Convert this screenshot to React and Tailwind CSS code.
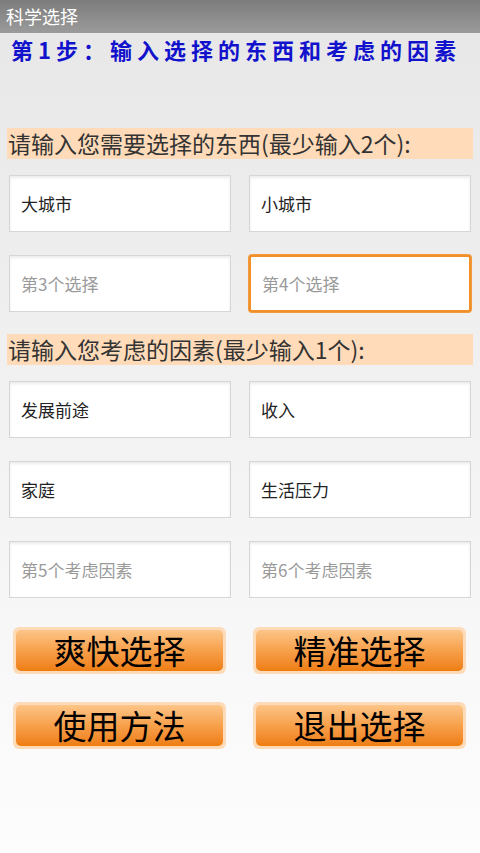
import React from "react";

const font = { fontFamily: '"Noto Sans CJK SC", "Noto Sans", sans-serif' };

function Field({ value, placeholder, focused }) {
  return (
    <input
      readOnly
      defaultValue={value}
      placeholder={placeholder}
      className={
        "h-[57px] w-full bg-white px-[11px] text-[17px] text-[#222] placeholder:text-[#9a9a9a] outline-none " +
        (focused
          ? "border-2 border-[#f1902a] rounded-[3px] shadow-[0_0_0_1px_#f39a3a]"
          : "border border-[#d6d6d6] shadow-[inset_0_2px_3px_rgba(0,0,0,0.08)]")
      }
      style={font}
    />
  );
}

function Btn({ children }) {
  return (
    <div className="h-[47px] rounded-[6px] bg-[#fddbb8] p-[3px] flex">
      <div className="flex-1 rounded-[5px] bg-gradient-to-b from-[#fcc587] via-[#f7a04a] to-[#ee7d0c] flex items-center justify-center text-[33px] text-black leading-none" style={font}>
        {children}
      </div>
    </div>
  );
}

export default function App() {
  return (
    <div className="w-[480px] h-[853px] flex flex-col bg-gradient-to-b from-[#e7e7e7] to-[#fdfdfd]" style={font}>
      <div className="h-[33px] bg-gradient-to-b from-[#7c7c7c] to-[#9b9b9b] flex items-center px-[6px] text-white text-[18px]">
        科学选择
      </div>
      <div className="pl-[11px] pt-0 h-[95px] text-[22px] font-bold text-[#1212cc] tracking-[5px] leading-[32px]">
        第1步：输入选择的东西和考虑的因素
      </div>
      <div className="mx-[7px] h-[31px] bg-[#ffdbb9] flex items-center pl-[1px] text-[23px] text-[#333] leading-none">
        请输入您需要选择的东西(最少输入2个):
      </div>
      <div className="grid grid-cols-2 gap-x-[18px] gap-y-[23px] px-[9px] mt-[16px]">
        <Field value="大城市" />
        <Field value="小城市" />
        <Field placeholder="第3个选择" />
        <Field placeholder="第4个选择" focused />
      </div>
      <div className="mx-[7px] mt-[22px] h-[31px] bg-[#ffdbb9] flex items-center pl-[1px] text-[23px] text-[#333] leading-none">
        请输入您考虑的因素(最少输入1个):
      </div>
      <div className="grid grid-cols-2 gap-x-[18px] gap-y-[23px] px-[9px] mt-[16px]">
        <Field value="发展前途" />
        <Field value="收入" />
        <Field value="家庭" />
        <Field value="生活压力" />
        <Field placeholder="第5个考虑因素" />
        <Field placeholder="第6个考虑因素" />
      </div>
      <div className="grid grid-cols-2 gap-x-[27px] gap-y-[28px] px-[13px] pr-[14px] mt-[29px]">
        <Btn>爽快选择</Btn>
        <Btn>精准选择</Btn>
        <Btn>使用方法</Btn>
        <Btn>退出选择</Btn>
      </div>
    </div>
  );
}
